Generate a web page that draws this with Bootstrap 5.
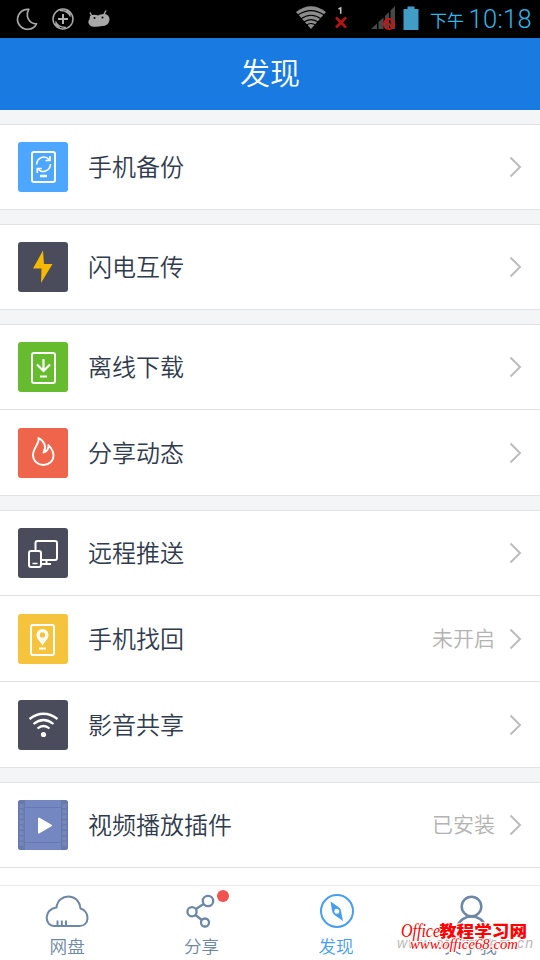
<!DOCTYPE html>
<html lang="zh-CN">
<head>
<meta charset="utf-8">
<meta name="viewport" content="width=device-width, initial-scale=1">
<title>发现</title>
<link rel="stylesheet" href="https://cdn.jsdelivr.net/npm/bootstrap@5.3.0/dist/css/bootstrap.min.css">
<style>
body{font-family:Roboto,"Noto Sans CJK SC",sans-serif;background:#f4f5f7;color:#303b4d}
svg{display:block;flex:none}
.screen{width:540px;height:960px}
.statusbar{height:38px;background:#000;color:#33b5e5}
.ampm{font-size:17px;line-height:38px;padding-top:2px;height:38px}
.clock{font-size:25.5px;line-height:38px;font-weight:300;letter-spacing:.3px}
.titlebar{height:72px;background:#197be1;font-size:30px;line-height:71px;font-weight:350}
.groups{gap:14px;padding-top:14px}
.group{border-top:1px solid #e0e1e3}
.entry{height:86px;padding:1px 17.5px 0 18px;border-bottom:1px solid #e0e1e3;background:#fff}
.entry:first-child{height:85px;padding-top:0}
.tile{width:50px;height:50px;border-radius:3px;margin-right:20px;overflow:hidden}
.label{font-size:24px;line-height:36px;padding-top:2px;font-weight:350}
.state{font-size:21px;line-height:30px;color:#b3b3b3;margin-right:13.5px;font-weight:350}
.tabs{height:75px;border-top:1px solid #ececee;background:#fff}
.tab{width:134.4px;color:#6d87a5;font-size:17.6px}
.tab span{line-height:24px;margin-top:4px;font-weight:350}
.tab.on{color:#469eef}
.tab svg{margin-top:5px;overflow:visible}
.stamp{right:0;bottom:0;width:150px;height:46px}
</style>
</head>
<body>
<div class="screen d-flex flex-column position-relative overflow-hidden">
<header class="statusbar d-flex">
<svg width="426" height="38" viewBox="0 0 426 38" fill="none">
<path d="M27 9.3a10 10 0 1 0 9.5 14.5C29 24 25 16 28.800 9.300z" stroke="#a8a8a8" stroke-width="1.700" stroke-linejoin="round"/>
<circle cx="63" cy="19" r="10" stroke="#a8a8a8" stroke-width="1.500"/>
<path d="M58 19h10M63 14v10" stroke="#b0b0b0" stroke-width="2"/><path d="M60 10.500q8 0 10.500 6M66 9.600l5 5M55.500 21.500q3 6 10.500 6M55 23.500l5 5" stroke="#a8a8a8" stroke-width="1.300"/>
<path d="M90 12.500l2 4M106 10.500l-2 4" stroke="#a8a8a8" stroke-width="1.400"/>
<path d="M90 16Q94 14 98 15.500Q101 13.500 105 14Q109.700 15 109.500 20Q108.500 26 102 26Q97 27.500 91 26.300Q86.500 23 89.500 19Z" fill="#a8a8a8"/>
<circle cx="94.500" cy="18" r="1" fill="#000"/><circle cx="102.500" cy="17.500" r="1" fill="#000"/>
<path d="M311 29L296 12Q311 0.500 326 12Z" fill="#8c8c8c"/>
<path d="M297.500 15.300Q311 6 324.500 15.300M300.500 19Q311 11.500 321.500 19M303.500 22.300Q311 17 318.500 22.300M306 25.500Q311 21.500 316 25.500" stroke="#000" stroke-width="1.100"/>
<path d="M338.500 9l2.200-1v5.800" stroke="#c8c8c8" stroke-width="1.500"/>
<path d="M336 17.500l10 10M346 17.500l-10 10" stroke="#b91414" stroke-width="2.600"/>
<path d="M371 29l6-5.500V29zM378.500 29v-7l5-4.500V29zM385 29V16l4-4v17zM390.500 29V10.500l4.500-4.500v23z" fill="#484848"/>
<circle cx="389" cy="24" r="5" stroke="#d31212" stroke-width="2"/><path d="M385.500 20.500l7 7" stroke="#d31212" stroke-width="2"/>
<path d="M407.500 6.500h7V9h4v21h-15V9h4z" fill="#419dc5"/>
</svg>
<span class="ampm ms-1">下午</span><span class="clock ms-auto pe-2">10:18</span>
</header>
<h1 class="titlebar text-white text-center m-0">发现</h1>
<main class="groups d-flex flex-column">
<section class="group">
<div class="entry d-flex align-items-center">
<svg class="tile" viewBox="0 0 50 50" fill="none" stroke="#fff"><rect width="50" height="50" fill="#4da6ff" stroke="none"/><rect x="14" y="10" width="23" height="30" rx="2" stroke-width="2"/><path d="M22 34h7" stroke-width="2.400"/><path d="M18.700 22.500C19 15 27 13 31 17.500M32 14v4.500h-4.500M32.500 22C32 29.500 24 31.500 20 27M19.300 31v-4.500h4.500" stroke-width="1.600"/></svg>
<span class="label">手机备份</span>
<svg class="ms-auto" width="14" height="22" viewBox="0 0 14 22" fill="none" stroke="#bcbcbc" stroke-width="2"><path d="M1.500 1.500L11 11l-9.500 9.500"/></svg>
</div>
</section>
<section class="group">
<div class="entry d-flex align-items-center">
<svg class="tile" viewBox="0 0 50 50"><rect width="50" height="50" fill="#4a4c5c"/><path d="M25 8.500L15 26.500h8.500L23 41 34.500 22H26z" fill="#f6b900"/></svg>
<span class="label">闪电互传</span>
<svg class="ms-auto" width="14" height="22" viewBox="0 0 14 22" fill="none" stroke="#bcbcbc" stroke-width="2"><path d="M1.500 1.500L11 11l-9.500 9.500"/></svg>
</div>
</section>
<section class="group">
<div class="entry d-flex align-items-center">
<svg class="tile" viewBox="0 0 50 50" fill="none" stroke="#fff" stroke-width="2.200"><rect width="50" height="50" fill="#66bb2e" stroke="none"/><rect x="14" y="11" width="23" height="30" rx="2" stroke-width="2"/><path d="M25.500 17v12M19 22.500l6.500 6.500 6.500-6.500M22 34.500h7"/></svg>
<span class="label">离线下载</span>
<svg class="ms-auto" width="14" height="22" viewBox="0 0 14 22" fill="none" stroke="#bcbcbc" stroke-width="2"><path d="M1.500 1.500L11 11l-9.500 9.500"/></svg>
</div>
<div class="entry d-flex align-items-center">
<svg class="tile" viewBox="0 0 50 50" fill="none" stroke="#fff" stroke-width="1.900" stroke-linejoin="round"><rect width="50" height="50" fill="#ee654c" stroke="none"/><path d="M20.500 10C22 15 15 20 15 27C15 33 20 37 25.500 37C31 37 35.500 33 35.500 27.500C35.500 22.500 33 20 30.500 17C31 21 28.500 24 25.500 24.500C29 19 26.500 13 20.500 10Z"/></svg>
<span class="label">分享动态</span>
<svg class="ms-auto" width="14" height="22" viewBox="0 0 14 22" fill="none" stroke="#bcbcbc" stroke-width="2"><path d="M1.500 1.500L11 11l-9.500 9.500"/></svg>
</div>
</section>
<section class="group">
<div class="entry d-flex align-items-center">
<svg class="tile" viewBox="0 0 50 50" fill="none" stroke="#fff" stroke-width="2"><rect width="50" height="50" fill="#4a4c5c" stroke="none"/><path d="M17.500 22V15q0-2 2-2H37q2 0 2 2v15q0 2-2 2H24M28.500 32v4M24 36h9"/><rect x="11" y="23" width="12" height="16" rx="2"/><path d="M14.500 35.500h5" stroke-width="1.500"/></svg>
<span class="label">远程推送</span>
<svg class="ms-auto" width="14" height="22" viewBox="0 0 14 22" fill="none" stroke="#bcbcbc" stroke-width="2"><path d="M1.500 1.500L11 11l-9.500 9.500"/></svg>
</div>
<div class="entry d-flex align-items-center">
<svg class="tile" viewBox="0 0 50 50" fill="none" stroke="#fff"><rect width="50" height="50" fill="#f6c43c" stroke="none"/><rect x="13" y="11" width="23" height="30" rx="2" stroke-width="2"/><path fill="#fff" fill-rule="evenodd" stroke="none" d="M24.500 31.500C22 27 18.500 25 18.500 21a6 6 0 0 1 12 0C30.500 25 27 27 24.500 31.500zM24.500 18.300a2.700 2.700 0 1 0 0 5.400a2.700 2.700 0 0 0 0-5.400z"/><path d="M21 34.500h7" stroke-width="2.200"/></svg>
<span class="label">手机找回</span>
<span class="state ms-auto">未开启</span>
<svg width="14" height="22" viewBox="0 0 14 22" fill="none" stroke="#bcbcbc" stroke-width="2"><path d="M1.500 1.500L11 11l-9.500 9.500"/></svg>
</div>
<div class="entry d-flex align-items-center">
<svg class="tile" viewBox="0 0 50 50" fill="none" stroke="#fff" stroke-width="2.200"><rect width="50" height="50" fill="#4a4c5c" stroke="none"/><path d="M11.500 19Q25.500 8.500 39.500 19M15.500 24Q25.500 16 35.500 24M19.500 28.500Q25.500 23.500 31.500 28.500"/><circle cx="25.500" cy="34.500" r="2.600" fill="#fff" stroke="none"/></svg>
<span class="label">影音共享</span>
<svg class="ms-auto" width="14" height="22" viewBox="0 0 14 22" fill="none" stroke="#bcbcbc" stroke-width="2"><path d="M1.500 1.500L11 11l-9.500 9.500"/></svg>
</div>
</section>
<section class="group">
<div class="entry d-flex align-items-center">
<svg class="tile" viewBox="0 0 50 50" fill="none"><rect width="50" height="50" fill="#7587c1"/><path d="M0 0h7v50H0zM43 0h7v50h-7z" fill="#687aad"/><path d="M3.500 4v42M46.500 4v42" stroke="#7587bd" stroke-width="4" stroke-dasharray="4 1.400"/><path d="M7 7.500h36M7 42.500h36" stroke="#687aad"/><path d="M21 18.500l12 7-12 7z" fill="#fff" stroke="#fff" stroke-width="2" stroke-linejoin="round"/></svg>
<span class="label">视频播放插件</span>
<span class="state ms-auto">已安装</span>
<svg width="14" height="22" viewBox="0 0 14 22" fill="none" stroke="#bcbcbc" stroke-width="2"><path d="M1.500 1.500L11 11l-9.500 9.500"/></svg>
</div>
</section>
</main>
<div class="bg-white flex-grow-1"></div>
<nav class="tabs d-flex">
<div class="tab d-flex flex-column align-items-center">
<svg width="50" height="40" viewBox="0 0 50 40" fill="none" stroke="currentColor" stroke-width="2"><path d="M12.500 35C2 35 1.500 18 14.500 16.500C16 2 36.500 1 38.500 17.500C48 20 48 35 37.500 35ZM15.500 35v-5.500M19.800 35v-5.500M24 35v-5.500"/></svg>
<span>网盘</span>
</div>
<div class="tab d-flex flex-column align-items-center">
<svg width="56" height="40" viewBox="0 0 56 40" fill="none" stroke="currentColor" stroke-width="2.300"><circle cx="34" cy="10" r="5.200"/><circle cx="18" cy="20.800" r="4.600"/><circle cx="31" cy="31.500" r="4"/><path d="M22 18l7.500-5M21.500 24l6.300 5"/><circle cx="49" cy="5" r="6" fill="#f1524e" stroke="none"/></svg>
<span>分享</span>
</div>
<div class="tab on d-flex flex-column align-items-center">
<svg width="40" height="40" viewBox="0 0 40 40" fill="none" stroke="currentColor"><circle cx="21" cy="20" r="16" stroke-width="2"/><path fill="currentColor" fill-rule="evenodd" stroke="none" d="M14.500 10.500L22.500 16Q25 17.500 25 20L27 30L18.500 24Q16 22 16 19.500ZM20.800 17.700a2.500 2.500 0 1 0 0 5a2.500 2.500 0 0 0 0-5z"/></svg>
<span>发现</span>
</div>
<div class="tab d-flex flex-column align-items-center">
<svg width="40" height="40" viewBox="0 0 40 40" fill="none" stroke="currentColor" stroke-width="2.500"><circle cx="21.500" cy="15.500" r="9.800"/><path d="M7.500 36C10.500 22 32.500 22 35.500 36"/></svg>
<span>关于我</span>
</div>
</nav>
<svg class="stamp position-absolute" viewBox="0 0 150 46">
<g stroke="#fff" stroke-width="2" paint-order="stroke" stroke-linejoin="round">
<text x="7" y="34" font-family="Liberation Sans, sans-serif" font-size="14" font-style="italic" fill="#b8b8b8" textLength="136">www.office.com.cn</text>
<g fill="#f00"><text x="49" y="22.500" font-family="Noto Sans CJK SC, sans-serif" font-size="15.500" font-weight="900" textLength="88" lengthAdjust="spacingAndGlyphs">教程学习网</text>
<text x="11" y="22.500" font-family="Liberation Serif, serif" font-size="18" font-style="italic" textLength="39" lengthAdjust="spacingAndGlyphs">Office</text>
<text x="20" y="34.500" font-family="Liberation Serif, serif" font-size="15" font-style="italic" textLength="108" lengthAdjust="spacingAndGlyphs">www.office68.com</text></g>
</g>
</svg>
</div>
<script src="https://cdn.jsdelivr.net/npm/bootstrap@5.3.0/dist/js/bootstrap.bundle.min.js"></script>
</body>
</html>
